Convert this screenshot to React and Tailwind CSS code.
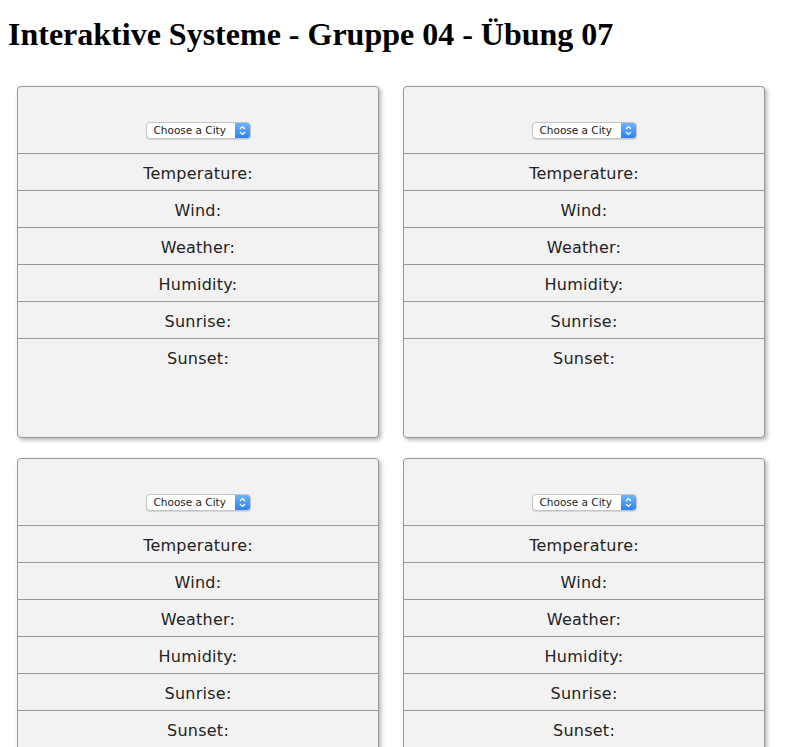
import React from 'react';

const fields = ['Temperature:', 'Wind:', 'Weather:', 'Humidity:', 'Sunrise:', 'Sunset:'];

const CitySelect = () => (
    <div className="flex h-[17px] w-[105px] items-stretch overflow-hidden rounded-[4px] border border-[#c4c4c4] bg-white shadow-[0_1px_1px_rgba(0,0,0,0.12)]">
        <div className="flex flex-1 items-center pl-[7px] text-[10.5px] leading-none text-[#222]">Choose a City</div>
        <div className="flex w-[15px] items-center justify-center bg-gradient-to-b from-[#6cb3fa] to-[#2a83f6]">
            <svg width="7" height="11" viewBox="0 0 7 11" fill="none">
                <path d="M1 4l2.5-2.5L6 4" stroke="white" strokeWidth="1.2" />
                <path d="M1 7l2.5 2.5L6 7" stroke="white" strokeWidth="1.2" />
            </svg>
        </div>
    </div>
);

const WeatherCard = () => (
    <div className="flex h-[352px] w-[362px] flex-col rounded-[4px] border border-[#999] bg-[#f2f2f2] shadow-[2px_2px_4px_rgba(0,0,0,0.3)]">
        {/* city select */}
        <div className="flex h-[66px] items-center justify-center pt-[20px]">
            <CitySelect />
        </div>
        {fields.map((f) => (
            <div key={f} className="flex h-[37px] items-center justify-center border-t border-[#999] pt-[3px] text-[16px] tracking-[0.25px] text-[#222]">
                {f}
            </div>
        ))}
    </div>
);

export default function App() {
    return (
        <div className="h-[747px] overflow-hidden bg-white px-[8px]" style={{ fontFamily: '"DejaVu Sans", Verdana, sans-serif' }}>
            <h1 className="mt-[10px] text-[32px] font-bold text-black" style={{ fontFamily: '"Liberation Serif", "Times New Roman", serif' }}>
                Interaktive Systeme - Gruppe 04 - Übung 07
            </h1>
            <div className="mt-[28px] grid w-max grid-cols-2 gap-x-[24px] gap-y-[20px] pl-[9px]">
                <WeatherCard />
                <WeatherCard />
                <WeatherCard />
                <WeatherCard />
            </div>
        </div>
    );
}
